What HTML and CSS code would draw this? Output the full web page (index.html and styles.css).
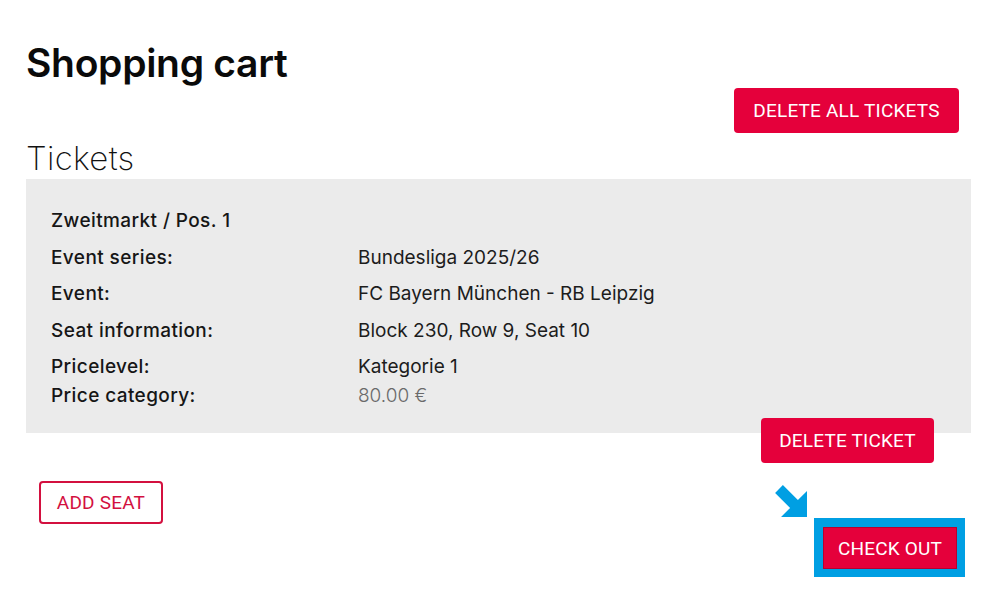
FILE: index.html
```html
<!DOCTYPE html>
<html lang="en">
<head>
<meta charset="utf-8">
<title>Shopping cart</title>
<link rel="stylesheet" href="styles.css">
</head>
<body>
<main class="page">
  <h1 class="title">Shopping cart</h1>
  <div class="top-actions">
    <button class="btn btn-red btn-delete-all">DELETE ALL TICKETS</button>
  </div>
  <h2 class="subtitle">Tickets</h2>
  <section class="panel">
    <div class="row"><div class="label">Zweitmarkt / Pos. 1</div><div class="value"></div></div>
    <div class="row"><div class="label">Event series:</div><div class="value">Bundesliga 2025/26</div></div>
    <div class="row"><div class="label">Event:</div><div class="value">FC Bayern München - RB Leipzig</div></div>
    <div class="row"><div class="label">Seat information:</div><div class="value">Block 230, Row 9, Seat 10</div></div>
    <div class="row row-last">
      <div class="label">Pricelevel:<br>Price category:</div>
      <div class="value">Kategorie 1<br><span class="price">80.00 €</span></div>
    </div>
  </section>
  <div class="ticket-actions">
    <button class="btn btn-red btn-delete">DELETE TICKET</button>
  </div>
  <div class="bottom-actions">
    <button class="btn btn-outline">ADD SEAT</button>
    <div class="checkout-wrap">
      <svg class="arrow" width="34" height="34" viewBox="0 0 34 34"><polygon points="1.1,8.9 8.9,1.1 23.9,16.1 33,7 33,33 7,33 16.1,23.9" fill="#009fe3"/></svg>
      <div class="highlight">
        <button class="btn btn-red btn-checkout">CHECK OUT</button>
      </div>
    </div>
  </div>
</main>
</body>
</html>
```

FILE: styles.css
```css
* { box-sizing: border-box; }
html, body { margin: 0; padding: 0; background: #ffffff; }
body { font-family: Inter, "Noto Sans", sans-serif; color: #111; }

.page {
  width: 945px;
  margin-left: 26px;
  padding-top: 36px;
}

.title {
  margin: 0;
  font-size: 39px;
  line-height: 54px;
  font-weight: 600;
  letter-spacing: -0.3px;
  color: #0a0a0a;
}

.top-actions {
  display: flex;
  justify-content: flex-end;
  padding-right: 12px;
  margin-top: -2px;
}

.subtitle {
  margin: 4px 0 0 0;
  font-size: 33px;
  line-height: 42px;
  font-weight: 200;
  letter-spacing: 0.3px;
  color: #111;
}

.btn {
  font-family: Roboto, "Liberation Sans", sans-serif;
  font-size: 19px;
  font-weight: 400;
  border-radius: 4px;
  cursor: pointer;
  letter-spacing: 0.2px;
}

.btn-red {
  background: #e5003b;
  color: #ffffff;
  border: none;
}

.btn-delete-all {
  width: 225px;
  height: 45px;
}

.panel {
  background: #ebebeb;
  padding: 27px 25px 23px 25px;
}

.row {
  display: grid;
  grid-template-columns: 307px 1fr;
  font-size: 19px;
  line-height: 29px;
  margin-bottom: 7.5px;
}
.row-last { margin-bottom: 0; }

.label { font-weight: 500; color: #161616; letter-spacing: 0.4px; }
.value { font-weight: 400; color: #1c1c1c; }
.price { font-weight: 300; color: #6a6a6a; }

.ticket-actions {
  display: flex;
  justify-content: flex-end;
  padding-right: 37px;
  margin-top: -15px;
}

.btn-delete {
  width: 173px;
  height: 45px;
}

.bottom-actions {
  display: flex;
  justify-content: space-between;
  align-items: flex-start;
  margin-top: 18px;
  padding-left: 13px;
  padding-right: 6px;
}

.btn-outline {
  background: #ffffff;
  color: #d3103f;
  border: 2px solid #d3103f;
  width: 124px;
  height: 43px;
}

.checkout-wrap {
  position: relative;
  margin-top: 37px;
}

.arrow {
  position: absolute;
  left: -40px;
  top: -34px;
}

.highlight {
  background: #009fe3;
  padding: 9px 8px 8px 9px;
}

.btn-checkout {
  display: block;
  width: 134px;
  height: 42px;
  border-radius: 0;
  border: 1px solid #b8002e;
}
```
